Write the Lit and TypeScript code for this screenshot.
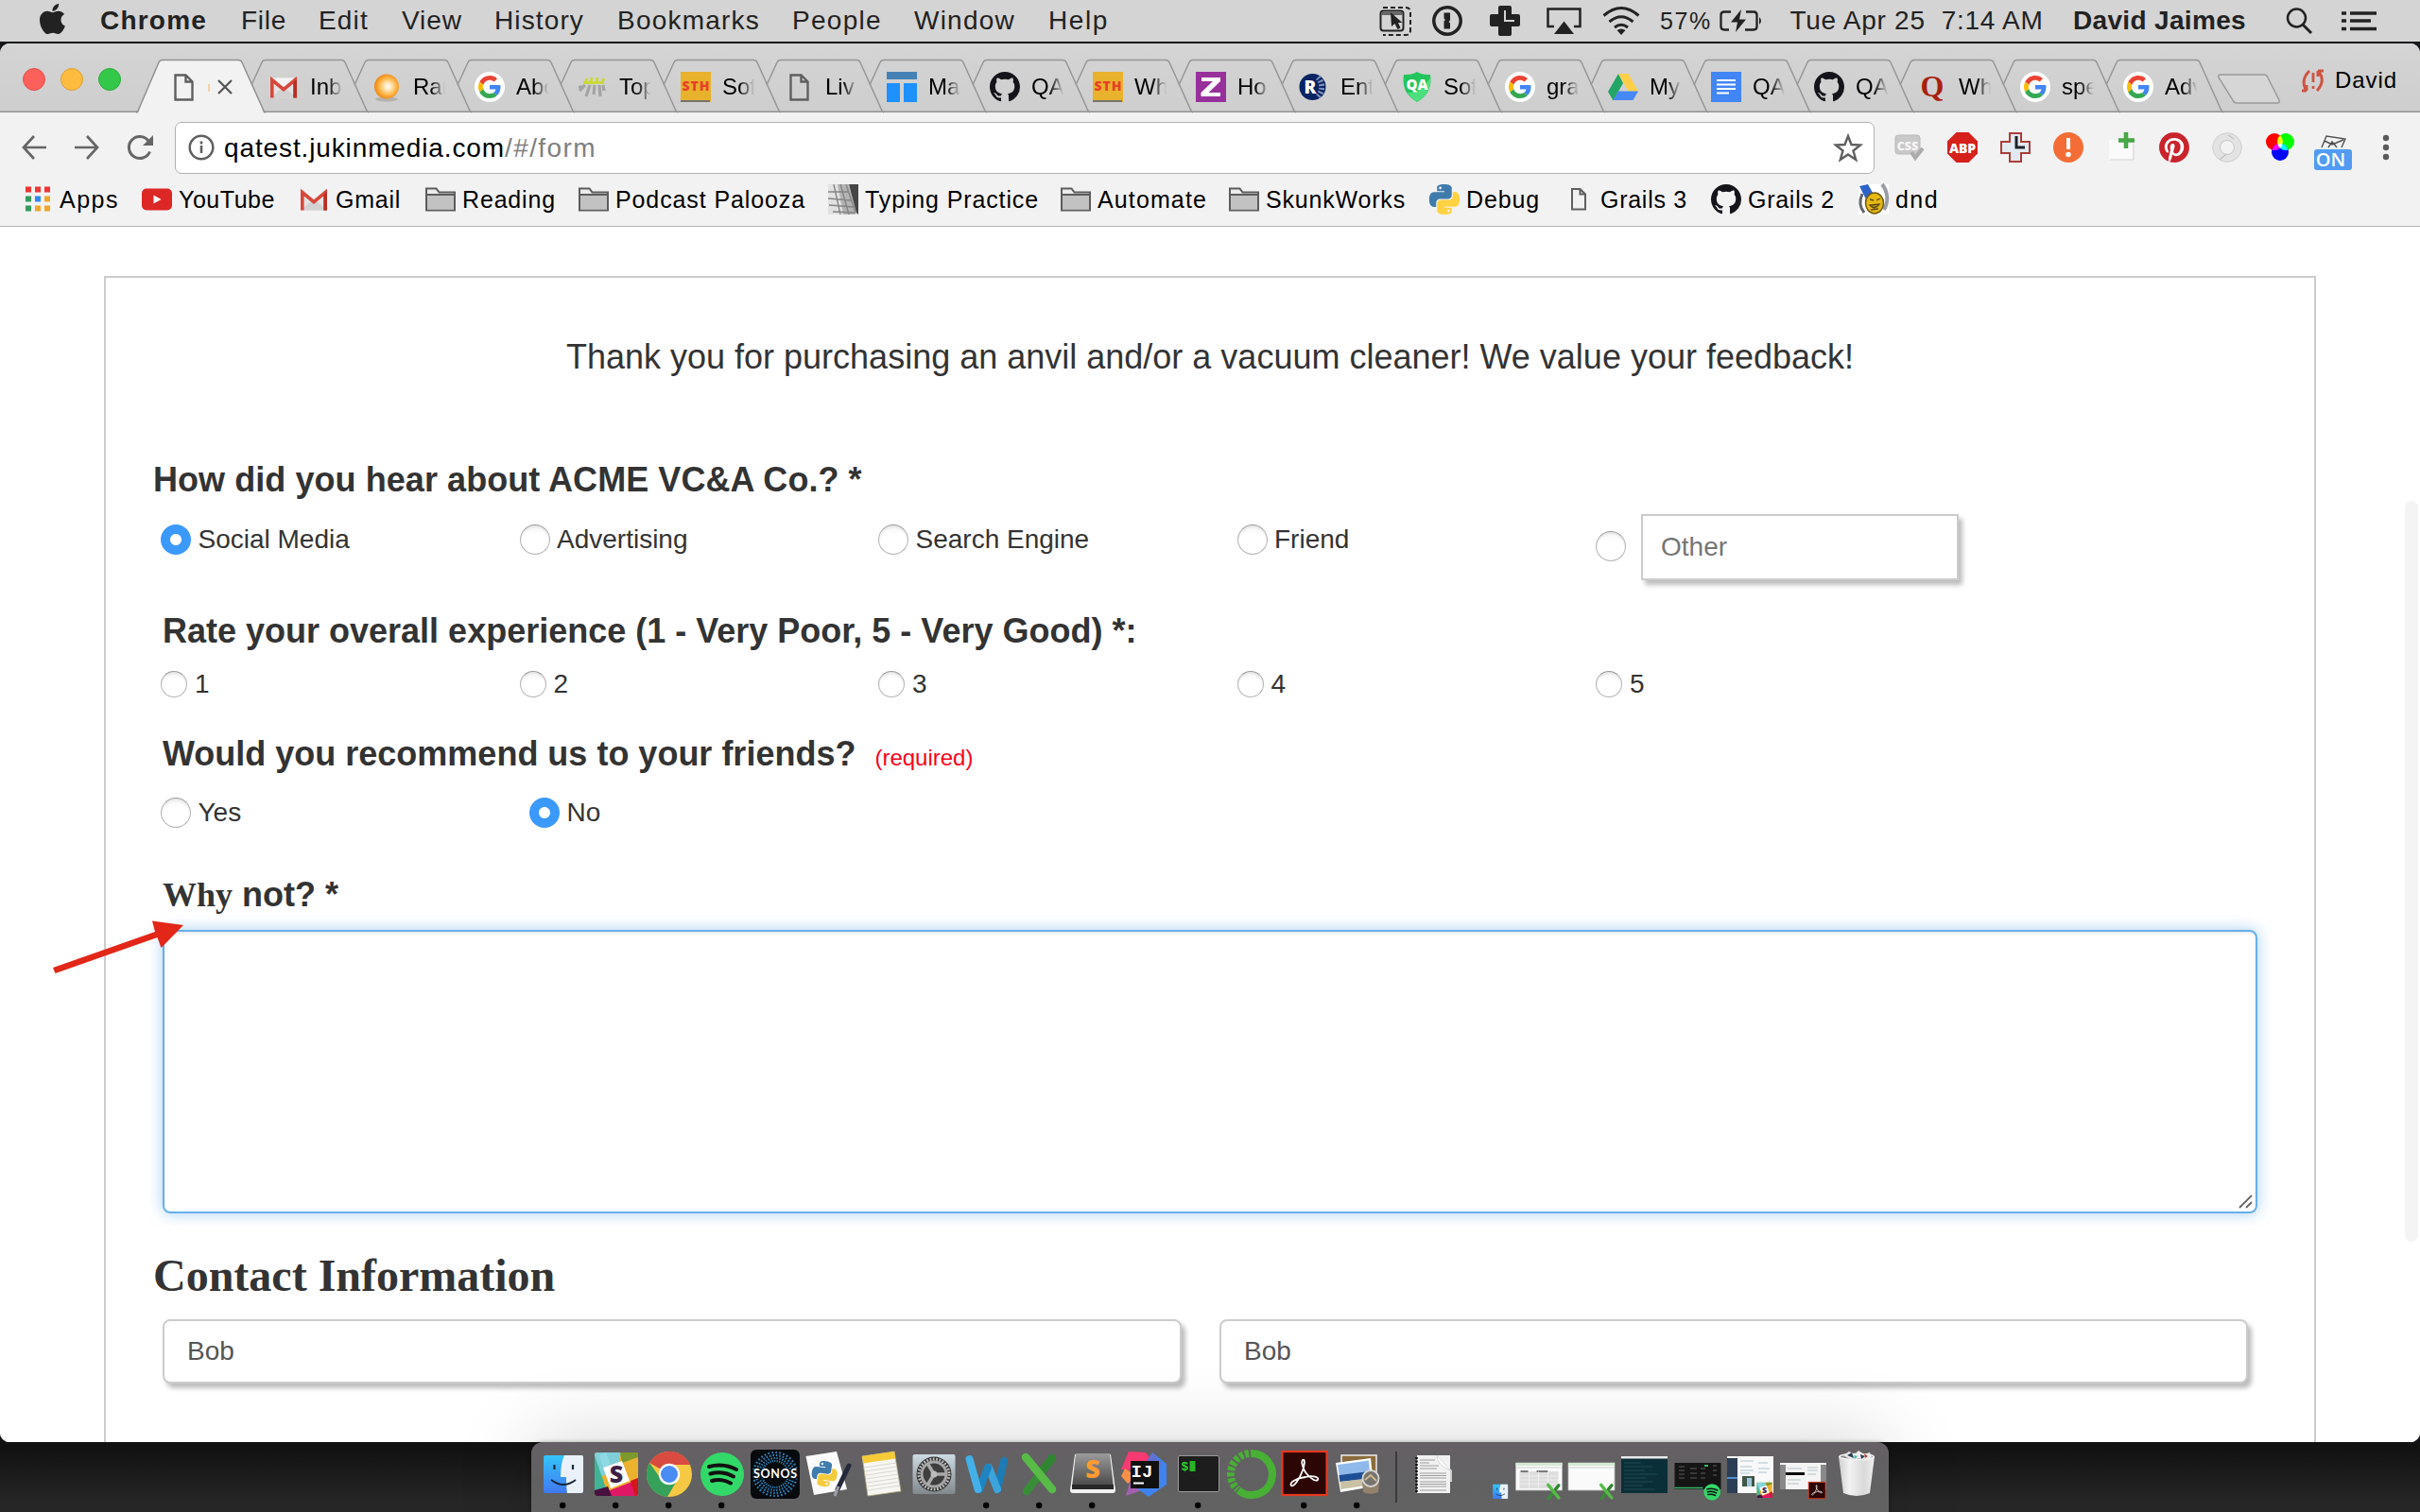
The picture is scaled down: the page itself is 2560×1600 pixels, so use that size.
import { LitElement, html, css, svg, nothing } from "lit";
import { customElement } from "lit/decorators.js";

const doc = (c = "#5f5f5f") => svg`<path d="M7.5 3.5h11l7 7v19h-18z M18.5 3.5v7h7" fill="none" stroke=${c} stroke-width="2.4"/>`;
const gmail = svg`<path d="M2 6.500h28v21H2z" fill="#e4e4e4"/><path d="M2 27.500l14-12 14 12z" fill="#d2d2d2"/><path d="M6 6.500l10 10 10-10z" fill="#f3f3f3"/><path d="M3.800 27.500V8.500L16 18.700 28.200 8.500v19" fill="none" stroke="#d8473b" stroke-width="3.600"/><path d="M26.400 11l3.600-3.500v20h-3.600z" fill="#b92e23"/>`;
const google = svg`<circle cx="16" cy="16" r="16" fill="#fff"/><g transform="translate(4 4) scale(.5)"><path fill="#ea4335" d="M24 9.500c3.540 0 6.710 1.220 9.210 3.600l6.850-6.850C35.900 2.380 30.470 0 24 0 14.620 0 6.510 5.380 2.560 13.220l7.980 6.190C12.430 13.720 17.740 9.500 24 9.500z"/><path fill="#4285f4" d="M46.980 24.550c0-1.570-.150-3.090-.380-4.550H24v9.020h12.940c-.580 2.960-2.260 5.480-4.780 7.180l7.730 6c4.510-4.180 7.090-10.360 7.090-17.650z"/><path fill="#fbbc05" d="M10.530 28.590c-.480-1.450-.760-2.990-.760-4.590s.270-3.140.760-4.590l-7.980-6.190C.920 16.460 0 20.120 0 24c0 3.880.920 7.540 2.560 10.780l7.970-6.190z"/><path fill="#34a853" d="M24 48c6.480 0 11.930-2.130 15.890-5.810l-7.730-6c-2.150 1.450-4.920 2.300-8.160 2.300-6.260 0-11.570-4.220-13.470-9.910l-7.980 6.190C6.510 42.620 14.620 48 24 48z"/></g>`;
const github = svg`<path transform="scale(2)" fill="#15141a" d="M8 0C3.58 0 0 3.58 0 8c0 3.54 2.29 6.53 5.47 7.59.4.07.55-.17.55-.38 0-.19-.01-.82-.01-1.49-2.01.37-2.53-.49-2.69-.94-.09-.23-.48-.94-.82-1.13-.28-.15-.68-.52-.01-.53.63-.01 1.08.58 1.23.82.72 1.21 1.87.87 2.33.66.07-.52.28-.87.51-1.07-1.78-.2-3.64-.89-3.64-3.95 0-.87.31-1.59.82-2.15-.08-.2-.36-1.02.08-2.12 0 0 .67-.21 2.2.82.64-.18 1.32-.27 2-.27s1.36.09 2 .27c1.53-1.04 2.2-.82 2.2-.82.44 1.1.16 1.92.08 2.12.51.56.82 1.27.82 2.15 0 3.07-1.87 3.75-3.65 3.95.29.25.54.73.54 1.48 0 1.07-.01 1.93-.01 2.2 0 .21.15.46.55.38A8.01 8.01 0 0 0 16 8c0-4.42-3.58-8-8-8z"/>`;
const orb = svg`<defs><radialGradient id="orb" cx=".55" cy=".5" r=".55"><stop offset="0" stop-color="#fff"/><stop offset=".3" stop-color="#ffe3b0"/><stop offset=".6" stop-color="#fdb94d"/><stop offset="1" stop-color="#ee8310"/></radialGradient></defs><ellipse cx="16" cy="29" rx="12" ry="2.500" fill="#b5b2ae"/><circle cx="16" cy="15.500" r="13" fill="url(#orb)"/>`;
const bars = svg`<path d="M8 14l-6 6M13 14l-4 12M18 14l-1 10M23 14l1 12M27 14l1 6M1 16h6" stroke="#a4a4a4" stroke-width="3.200"/><path d="M8 12l2-5M14 13l1-7M20 12l1-6M26 11l2-4M6 11.500h22" stroke="#cbd92b" stroke-width="2.600"/>`;
const sth = svg`<path d="M0 0h32v32H0z" fill="#e8b22c"/><path d="M0 30h31v2H0z" fill="#7a736c"/><text class="logo" x="16" y="20" font-size="14" text-anchor="middle" textLength="29" fill="#e8402a">STH</text>`;
const trello = svg`<path d="M0 0h32v8H0z" fill="#4482b5"/><path d="M0 12h14v20H0zM18 12h14v20H18z" fill="#1e90ff"/>`;
const zed = svg`<path d="M0 0h32v32H0z" fill="#97309a"/><path d="M6 6h20v4L13.500 22H26v4H5.500v-4L18 10H6z" fill="#fff"/>`;
const rr = svg`<circle cx="14.500" cy="16" r="14" fill="#0a2463"/><path d="M20 6a14 14 0 0 1 0 20" fill="none" stroke="#7f93bb" stroke-width="6" stroke-dasharray="2 2"/><text class="logo" x="12" y="23" font-size="19" text-anchor="middle" fill="#fff">R</text>`;
const shield = svg`<path d="M16 0c5 3 10 3 14 3 2 12-2 22-14 29C4 25 0 15 2 3c4 0 9 0 14-3z" fill="#22c55b"/><path d="M30 6c1 10-3 19-14 26-4-3-8-6-10-10 10 0 18-5 24-16z" fill="#4be07d"/><text class="logo" x="16" y="19" font-size="15" text-anchor="middle" fill="#fff">QA</text>`;
const drive = svg`<path d="M11 2L0 21l5.500 9.500L16 12z" fill="#23a566"/><path d="M11 2h10.500l10.500 18.500H21.500z" fill="#ffcf48"/><path d="M11 20.500h21L26.500 30H5.500z" fill="#4688f4"/>`;
const gdoc = svg`<path d="M0 0h32v32H0z" fill="#4285f4"/><path d="M6 9h20M6 13.500h20M6 18h20M6 22.500h13" stroke="#fff" stroke-width="2"/>`;
const quora = svg`<text class="serif" x="16" y="26" font-size="32" text-anchor="middle" fill="#a8200d">Q</text>`;
const folder = svg`<path d="M1 4.500h10.500l3 4H31v19H1z" fill="#ececec" stroke="#5c5c5c" stroke-width="2"/><path d="M2 12h28v14.500H2z" fill="#c2c2c2"/><path d="M1 11h30" stroke="#5c5c5c" stroke-width="2"/>`;
const youtube = svg`<rect y="4.500" width="32" height="23" rx="5" fill="#dc2725"/><path d="M12.500 11.500l8 4.500-8 4.500z" fill="#fff"/>`;
const apps = svg`${[0, 1, 2].map(r => [0, 1, 2].map(c => svg`<rect x=${3 + c * 10} y=${2.5 + r * 10} width="6" height="6" fill=${r === 0 ? "#ee3536" : c === 0 ? "#359b5b" : c === 1 && r === 1 ? "#2f88f4" : "#f0a62d"}/>`))}`;
const pyHalf = "M14.25.18l.9.2.73.26.59.3.45.32.34.34.25.34.16.33.1.3.04.26.02.2-.01.13V8.5l-.05.63-.13.55-.21.46-.26.38-.3.31-.33.25-.35.19-.35.14-.33.1-.3.07-.26.04-.21.02H8.77l-.69.05-.59.14-.5.22-.41.27-.33.32-.27.35-.2.36-.15.37-.1.35-.07.32-.04.27-.02.21v3.06H3.17l-.21-.03-.28-.07-.32-.12-.35-.18-.36-.26-.36-.36-.35-.46-.32-.59-.28-.73-.21-.88-.14-1.05-.05-1.23.06-1.22.16-1.04.24-.87.32-.71.36-.57.4-.44.42-.33.42-.24.4-.16.36-.1.32-.05.24-.01h.16l.06.01h8.16v-.83H6.18l-.01-2.75-.02-.37.05-.34.11-.31.17-.28.25-.26.31-.23.38-.2.44-.18.51-.15.58-.12.64-.1.71-.06.77-.04.84-.02 1.27.05zm-6.3 1.98l-.23.33-.08.41.08.41.23.34.33.22.41.09.41-.09.33-.22.23-.34.08-.41-.08-.41-.23-.33-.33-.22-.41-.09-.41.09z";
const python = svg`<g transform="scale(1.333)"><path d=${pyHalf} fill="#3f7cac"/><path d=${pyHalf} fill="#ffd242" transform="rotate(180 12 12)"/></g>`;
const keyboard = svg`<path d="M0 0h32v32H0z" fill="#e2e2e2"/><path d="M22 0h10v32l-4-4z" fill="#454545"/><path d="M10 0h12l8 30-2 2H16z" fill="#b4b4b4"/><path d="M6 0l7 32M13 0l9 32M19 0l10 30M0 8h22M0 15l24 2M1 22l26 2M5 29l24 1" stroke="#858585" stroke-width="1.400" fill="none"/>`;
const dnd = svg`<path d="M0 0h32v32H0z" fill="#fff"/><path d="M1 2l9-2 5 9-7 7z" fill="#2d62c8"/><path d="M25 0c6 8 7 18 2 27" fill="none" stroke="#9a9ca6" stroke-width="4"/><path d="M4 10c-3 7-3 14 2 20" fill="none" stroke="#61646c" stroke-width="3"/><ellipse cx="17" cy="20" rx="9.500" ry="11" fill="#e6b911" stroke="#6f5a10" stroke-width="1.500"/><path d="M12 16l4 1M19 17l4-2M12 22q5 6 10-1zM13 27l8-1" fill="#b08b1a" stroke="#5c4b14" stroke-width="1.300"/>`;

const tabs: [string, unknown][] = [
  ["", doc()], ["Inb", gmail], ["Ran", orb], ["Abo", google], ["Top", bars], ["Sof", sth], ["Liv", doc()],
  ["Ma", trello], ["QA", github], ["Wh", sth], ["Ho", zed], ["Ent", rr], ["Sof", shield], ["gra", google],
  ["My", drive], ["QA", gdoc], ["QA", github], ["Wh", quora], ["spe", google], ["Adv", google],
];

const bookmarks: [number, string, unknown, number][] = [
  [24, "Apps", apps, 60], [150, "YouTube", youtube, 99], [316, "Gmail", gmail, 66], [450, "Reading", folder, 96],
  [612, "Podcast Palooza", folder, 198], [876, "Typing Practice", keyboard, 181], [1122, "Automate", folder, 113],
  [1300, "SkunkWorks", folder, 145], [1512, "Debug", python, 75], [1654, "Grails 3", svg`<path d="M9 5h8.500l5.500 5.500v16H9zM17.500 5v5.500H23" fill="none" stroke="#5f5f5f" stroke-width="2"/>`, 89],
  [1810, "Grails 2", github, 89], [1966, "dnd", dnd, 43],
];

const extensions = [
  svg`<rect x="1" y="3" width="26" height="20" rx="3" fill="#c9c9c9" stroke="#b9b9b9"/><text class="logo" x="14" y="18.500" font-size="12.500" text-anchor="middle" fill="#f6f6f6">CSS</text><path d="M18 21l4 6 8-10" fill="none" stroke="#ababab" stroke-width="4"/>`,
  svg`<path d="M9.500 0h13L32 9.500v13L22.500 32h-13L0 22.500v-13z" fill="#d5201b"/><text class="logo" x="16" y="21.500" font-size="14" text-anchor="middle" textLength="28" fill="#fff">ABP</text>`,
  svg`<path d="M10 1h12v9h9v12h-9v9H10v-9H1V10h9z" fill="#e3e9f1" stroke="#aa3e38" stroke-width="2"/><path d="M17 4v12h9" fill="none" stroke="#1e2328" stroke-width="3"/>`,
  svg`<circle cx="16" cy="16" r="16" fill="#f46d36"/><path d="M14 6h4v12h-4z" fill="#fff"/><circle cx="16" cy="23.500" r="2.700" fill="#fff"/>`,
  svg`<path d="M3 8h12v4h13v17H3z" fill="#fafafa"/><path d="M4 29h25V12" fill="none" stroke="#dedede" stroke-width="1.500"/><path d="M21 0v17M13 8.500h17" stroke="#46a847" stroke-width="4.500"/>`,
  svg`<circle cx="16" cy="16" r="15.500" fill="#fff"/><path transform="scale(1.333)" fill="#c9232c" d="M12.017 0C5.396 0 .029 5.367.029 11.987c0 5.079 3.158 9.417 7.618 11.162-.105-.949-.199-2.403.041-3.439.219-.937 1.406-5.957 1.406-5.957s-.359-.72-.359-1.781c0-1.663.967-2.911 2.168-2.911 1.024 0 1.518.769 1.518 1.688 0 1.029-.653 2.567-.992 3.992-.285 1.193.6 2.165 1.775 2.165 2.128 0 3.768-2.245 3.768-5.487 0-2.861-2.063-4.869-5.008-4.869-3.41 0-5.409 2.562-5.409 5.199 0 1.033.394 2.143.889 2.741.099.12.112.225.085.345-.09.375-.293 1.199-.334 1.363-.053.225-.172.271-.401.165-1.495-.69-2.433-2.878-2.433-4.646 0-3.776 2.748-7.252 7.92-7.252 4.158 0 7.392 2.967 7.392 6.923 0 4.135-2.607 7.462-6.233 7.462-1.214 0-2.354-.629-2.758-1.379l-.749 2.848c-.269 1.045-1.004 2.352-1.498 3.146 1.123.345 2.306.535 3.55.535 6.607 0 11.985-5.365 11.985-11.987C23.97 5.39 18.592.026 11.985.026L12.017 0z"/>`,
  svg`<circle cx="16" cy="16" r="11.500" fill="none" stroke="#e3e3e3" stroke-width="8"/><circle cx="16" cy="16" r="15.300" fill="none" stroke="#cfcfcf"/><circle cx="16" cy="16" r="7.500" fill="none" stroke="#c6c6c6"/><path d="M8 29l7-6M17 3l6 4" stroke="#c2c2c2" stroke-width="1.500"/>`,
  svg`<g transform="translate(1 0)"><circle cx="9" cy="10" r="9" fill="#f00"/><circle cx="21" cy="10" r="9" fill="#0f0"/><circle cx="15" cy="21" r="9" fill="#00f"/><path d="M15 3.300a9 9 0 0 1 2.500 9A9 9 0 0 1 15 16.700a9 9 0 0 1-3-6.700 9 9 0 0 1 3-6.700z" fill="#ff0"/><path d="M6.500 18.500a9 9 0 0 0 8.500-1.800V12a9 9 0 0 0-8.500 6.500z" fill="#f0f"/><path d="M23.500 18.500A9 9 0 0 1 15 16.700V12a9 9 0 0 1 8.500 6.500z" fill="#0ff"/><path d="M12.500 12.500q2.500-1 5 0a9 9 0 0 1-2.500 4.200 9 9 0 0 1-2.500-4.200z" fill="#fff"/></g>`,
  svg`<g><path d="M4 16L9 4l20 3-4 9M7 9l8 4 12-5M11 16l4-6 5 6" fill="none" stroke="#4f4f4f" stroke-width="1.400"/><rect x="-4" y="18" width="40" height="22" rx="3" fill="#529bf2"/><text class="on" x="13.500" y="36" font-size="20" text-anchor="middle" fill="#fff">ON</text></g>`,
  svg`<circle cx="16" cy="6" r="3.200" fill="#5a5a5a"/><circle cx="16" cy="16" r="3.200" fill="#5a5a5a"/><circle cx="16" cy="26" r="3.200" fill="#5a5a5a"/>`,
];

/* Dock drawings: each fills a 56x74 cell, artwork centred on (28,34). */
const finder = svg`<defs><linearGradient id="fb" x2="0" y2="1"><stop offset="0" stop-color="#35c5fa"/><stop offset="1" stop-color="#3f78f0"/></linearGradient></defs><rect x="7" y="14" width="42" height="40" rx="2" fill="url(#fb)"/><path d="M29 14h18a2 2 0 0 1 2 2v36a2 2 0 0 1-2 2H32q-1-6-1-17h-6q0-14 4-23z" fill="#eaf1f8"/><path d="M18.500 24v5M38 24v5" stroke="#1b2b40" stroke-width="2.200"/><path d="M15 40q13 10 26 0" fill="none" stroke="#16263c" stroke-width="1.800"/>`;
const slack = svg`<clipPath id="sc"><rect x="5" y="11" width="46" height="46" rx="2.500"/></clipPath><g clip-path="url(#sc)"><path d="M5 11h46v46H5z" fill="#ecb22e"/><path d="M5 11h28l-4 18-18 8-6-2z" fill="#7fd0d9"/><path d="M5 14l14 41H5z" fill="#40b596"/><path d="M32 11h19v5l-17 6z" fill="#7d982b"/><path d="M8 56l42-16v17H8z" fill="#e01765"/><path d="M5 51l14-4 4 10H5z" fill="#47103f"/><path d="M43 41l8-3v19h-3z" fill="#d4151c"/><path d="M14 27l20-7 8 21-20 8z" fill="#fff"/><path d="M10 14l7-3 5 13-8 3z" fill="#8fd9e2"/></g><text class="logo" x="28" y="43" font-size="25" text-anchor="middle" fill="#3f2045">S</text>`;
const chrome = svg`<circle cx="28" cy="34" r="24" fill="#f6c944"/><path d="M28 34L7.200 22A24 24 0 0 1 50 24H28z" fill="#d94b40"/><path d="M7.200 22A24 24 0 0 0 26 58l11-19-9-5-9 5z" fill="#35a15a"/><circle cx="28" cy="34" r="11.200" fill="#fff"/><circle cx="28" cy="34" r="9" fill="#4b8bf4"/>`;
const spotify = svg`<circle cx="28" cy="34" r="23" fill="#33d968"/><path d="M14 26q15-4 29 3M15.500 33.500q13-3.500 24.500 3M17 41q10-3 20 2.500" fill="none" stroke="#111" stroke-linecap="round" stroke-width="4"/>`;
const sonos = svg`<rect x="2" y="8" width="52" height="52" rx="6" fill="#070a0d"/><g fill="none" stroke="#2f80b8" stroke-width="2.200"><circle cx="28" cy="34" r="23" stroke-dasharray="1.700 2.300"/><circle cx="28" cy="34" r="20" stroke-dasharray="1.600 1.900"/><circle cx="28" cy="34" r="17" stroke-dasharray="1.400 1.600"/><circle cx="28" cy="34" r="14" stroke-dasharray="1.200 1.200"/></g><path d="M3 29h50v10H3z" fill="#070a0d" opacity=".7"/><text class="sonos" x="28" y="38" font-size="12.500" text-anchor="middle" textLength="46" fill="#fff">SONOS</text>`;
const pyapp = svg`<path d="M4.500 15L37 10l11 40-35 6z" fill="#fbfbfb"/><g transform="translate(11 20) rotate(8 12 12) scale(1.120)"><path d=${pyHalf} fill="#3f7cac"/><path d=${pyHalf} fill="#f5cb3e" transform="rotate(180 12 12)"/></g><path d="M50 25L38 50" stroke="#23283a" stroke-width="5" stroke-linecap="round"/><path d="M39 47l-4 10" stroke="#9da0a6" stroke-width="3"/>`;
const notes = svg`<path d="M8 15l34-5 7 42-35 5z" fill="#f7f6f2" stroke="#b9ae84" stroke-width=".8"/><path d="M8 15l34-5 1.200 7.500-34 5z" fill="#f7cb35"/><path d="M10 27l34-5M11 31l34-5M11.500 35l34-5M12 39l34-5M13 43l34-5M13.500 47l34-5M14 51l34-5" stroke="#cfcfcb" stroke-width=".8"/>`;
const prefs = svg`<defs><linearGradient id="pg" x2="0" y2="1"><stop offset="0" stop-color="#cddbe2"/><stop offset="1" stop-color="#82898d"/></linearGradient></defs><rect x="5.500" y="13" width="45" height="42" rx="2" fill="url(#pg)"/><circle cx="28" cy="34" r="18.500" fill="#333"/><circle cx="28" cy="34" r="16" fill="none" stroke="#bbb" stroke-width="3" stroke-dasharray="1.800 1.550"/><circle cx="28" cy="34" r="13" fill="#3e3e3e" stroke="#a6a6a6" stroke-width="3"/><path d="M28 34h12M28 34l-6.500-11M28 34l-6.500 11" stroke="#aaa" stroke-width="3.500"/><circle cx="28" cy="34" r="3.500" fill="#bbb"/>`;
const word = svg`<g fill="none" stroke-linecap="round" stroke-width="8"><path d="M46 20l-7 30" stroke="#1d7cb5"/><path d="M30 27l9 23" stroke="#3ba4dd"/><path d="M29 27l-9 23" stroke="#1e85c2"/><path d="M9.500 18l9 32" stroke="#43b0e9"/></g>`;
const excelX = (t: string) => svg`<g transform=${t} fill="none" stroke-linecap="round" stroke-width="8.500"><path d="M41 17L30 31" stroke="#2f8531"/><path d="M28 34L14 52" stroke="#388d36"/><path d="M13 16l28 34" stroke="#58bb47"/></g>`;
const sublime = svg`<defs><linearGradient id="su" x2="0" y2="1"><stop offset="0" stop-color="#9b9b9b"/><stop offset="1" stop-color="#454545"/></linearGradient></defs><path d="M9 13h38l5 38q0 3-3 3H7q-3 0-3-3z" fill="#f1f1f1"/><path d="M10 12h36l4 36H6z" fill="url(#su)"/><path d="M6 45h44v5H6z" fill="#282828"/><text class="logo" x="28" y="38" font-size="27" text-anchor="middle" fill="#ff9b2f">S</text>`;
const idea = svg`<path d="M10 10l18 1 6 8-8 12-24-2z" fill="#f73a72"/><path d="M6 28l-4 8 7 8 10-8z" fill="#f7904b"/><path d="M7 57l5-17 18 5-6 6z" fill="#a55fb1"/><path d="M35 11l15 12v22L31 58 20 50z" fill="#3f83ef"/><path d="M35 11l10 12-8 10-10-10z" fill="#6272d1"/><rect x="12" y="20" width="30" height="29" fill="#101010"/><text class="mono" x="24" y="37" font-size="19" text-anchor="middle" fill="#fff">IJ</text><path d="M15 43.500h11" stroke="#fff" stroke-width="2"/>`;
const term = svg`<rect x="6.500" y="14.500" width="43" height="38" rx="1.500" fill="#1c1d1c" stroke="#9b9b9b"/><text class="mono" x="9.500" y="30" font-size="13" fill="#2fd12f">$</text><path d="M18.500 20h6v11h-6z" fill="#27b427"/>`;
const conda = svg`<path d="M27 12A22 22 0 1 1 14 51" fill="none" stroke="#47b035" stroke-width="8"/><path d="M25 12A22 22 0 0 0 13 50" fill="none" stroke="#47b035" stroke-width="8" stroke-dasharray="4 2"/>`;
const acro = (t = "") => svg`<g transform=${t}><rect x="4.500" y="10" width="47" height="46" fill="#2c0605" stroke="#e43820" stroke-width="2.200"/><path d="M26 19c3-2 2 6 0 11-3 8-9 18-12 16-3-3 6-8 15-9 8-2 15 0 13 3-3 3-13-6-15-12-2-5-2-8-1-9z" fill="none" stroke="#fff" stroke-width="1.800"/></g>`;
const preview = svg`<path d="M11 14h37v30H11z" fill="#8b6b3d" stroke="#eee" stroke-width="1.500"/><path d="M5 22l37-5 3 30-35 6z" fill="#fff"/><path d="M7 24l33-4.500 1 12-32 5z" fill="#8fb9ea"/><path d="M8.500 35l32-4 .8 8-32 3z" fill="#1e4f95"/><path d="M9.500 42l32-4 1 7-32 5z" fill="#c9c2a4"/><path d="M33 42l1 11q8 3.500 16 0l1-11z" fill="#94826d"/><circle cx="42" cy="38.500" r="8.500" fill="#77736d" stroke="#d5d5d5" stroke-width="1.800"/><path d="M36 40l6-5 6 6" stroke="#d0b893" stroke-width="2" fill="none"/>`;

const paper = svg`<path d="M11 14h35v40H11z" fill="#f1f1f1"/><path d="M32 14l14 14v14h2V30z" fill="#cfcfcf"/><path d="M32 14q0 10 14 16L32 14z" fill="#fff" stroke="#bbb" stroke-width=".5"/><path d="M10.500 16v38" stroke="#0c0c0c" stroke-width="2.500" stroke-dasharray="2 1.500"/><path d="M14 19h16M14 22h10M14 25h20M14 28h18M14 33h28M14 35.500h28M14 38h28M14 42h28M14 44.500h28M14 47h28M14 51h28" stroke="#9d9da0" stroke-width="1.200"/>`;
const sheet = (x: number, grid: boolean) => svg`<path d="M${x} 22h49v29h-49z" fill="#fafafa" stroke="#b9b9b9" stroke-width=".8"/><path d="M${x} 22h49v3h-49z" fill="#d5e8d5"/><path d="M${x + 1} 27h47" stroke="#cfcfcf"/>${grid ? svg`<path d="M${x + 4} 31h41v18h-41z" fill="#dedede"/><path d="M${x + 5} 31h8M${x + 22} 31h12" stroke="#555" stroke-width="1.500"/><path d="M${x + 4} 36h41M${x + 4} 40h41M${x + 4} 44h41M${x + 14} 31v18M${x + 24} 31v18M${x + 34} 31v18" stroke="#f5f5f5" stroke-width=".7"/>` : nothing}`;
const dockApps: [unknown, boolean][] = [
  [finder, true], [slack, true], [chrome, true], [spotify, true], [sonos, false], [pyapp, false], [notes, false], [prefs, false],
  [word, true], [excelX(""), true], [sublime, true], [idea, false], [term, true], [conda, false], [acro(), true], [preview, true],
];
const dockMinis = [
  paper,
  svg`<g transform="translate(32.500 39.500) scale(.38)">${finder}</g>`,
  svg`${sheet(3.500, true)}${excelX("translate(32.500 39) scale(.4)")}`,
  svg`${sheet(3, false)}${excelX("translate(32.500 39) scale(.4)")}`,
  svg`<path d="M3 16h49v38H3z" fill="#0b2f39"/><path d="M3 15h49v2.500H3z" fill="#e9e9e9" /><path d="M6 22h18M6 26h30M6 30h22M6 34h35M6 38h24M6 42h30M6 46h20M6 50h32" stroke="#1f4d55" stroke-width="1"/>`,
  svg`<path d="M3.500 22h49v28h-49z" fill="#151515"/><path d="M3.500 48.500h30" stroke="#37b567" stroke-width="1.500"/><path d="M8 26h6M8 30h6M8 34h6M8 38h6M20 28h7M20 33h7M20 38h7M31 28h5M31 33h5M31 38h5M44 25h4M44 30h4M44 35h4" stroke="#5c5c5c"/><path d="M35 25h4" stroke="#2fc05f" stroke-width="2"/><g transform="translate(32.500 40) scale(.38)">${spotify}</g>`,
  svg`<path d="M3 15h49v39H3z" fill="#f9f9f9"/><path d="M3 17h11v37H3z" fill="#2c3e55"/><path d="M3 37h11v2H3z" fill="#4d8fd0"/><path d="M17 20h14M17 26h12M17 30h14M17 33h10M36 22h10M36 28h12M36 32h9" stroke="#a9c5cf"/><path d="M19 36h13v11H19z" fill="#3f5747"/><path d="M24 38h5v9h-5z" fill="#9cc7d8"/><g transform="translate(32.500 38.500) scale(.36)">${slack}</g>`,
  svg`<path d="M3 22h49v28H3z" fill="#f4f4f4"/><path d="M3 24h6v26H3zM46 24h6v26h-6z" fill="#898989"/><path d="M9 32h20v3H9z" fill="#0b0b0b"/><path d="M11 28h15M11 40h14M11 44h12M32 27h11M32 30h11M32 34h9" stroke="#b5c2c9"/>${acro("translate(31.500 38.500) scale(.38)")}`,
  svg`<defs><linearGradient id="tr"><stop offset="0" stop-color="#cfcfcf"/><stop offset=".3" stop-color="#f2f2f2"/><stop offset=".7" stop-color="#d9d9d9"/><stop offset="1" stop-color="#eee"/></linearGradient></defs><path d="M9 15h38l-5 39q-14 6-28 0z" fill="url(#tr)"/><ellipse cx="28" cy="15.500" rx="18" ry="3" fill="#8f8f8f" stroke="#f5f5f5" stroke-width="1.500"/><path d="M14 14l6-4 6 3 4-4 6 4 6-2 2 5-8 4-6-3-6 3z" fill="#ececec"/><path d="M18 14l5-3 2 6zM32 13l5 2-4 3z" fill="#2c3d52"/><path d="M25 14l4 1-3 3z" fill="#3db5b0"/><path d="M36 12l4 3-3 2z" fill="#b3493c"/>`,
];

const menuItems: [number, string, number][] = [
  [108, "Chrome", 110], [257, "File", 45], [339, "Edit", 50], [427, "View", 61], [525, "History", 92],
  [655, "Bookmarks", 148], [840, "People", 92], [969, "Window", 104], [1111, "Help", 61],
];

@customElement("app-root")
class AppRoot extends LitElement {
  static styles = css`
    :host { display: block; width: 2560px; height: 1600px; overflow: hidden; }
    * { box-sizing: border-box; }
    svg { display: block; overflow: visible; flex: none; }
    .logo { font-family: "Open Sans", sans-serif; font-weight: 800; }
    .on { font-family: "Open Sans", sans-serif; font-weight: 600; }
    .sonos { font-family: Lato, sans-serif; font-weight: 700; }
    .serif { font-family: "Liberation Serif", serif; font-weight: 700; }
    .mono { font-family: "Liberation Mono", monospace; font-weight: 700; }
    .desktop { position: relative; width: 2560px; height: 1600px; overflow: hidden; display: flex; flex-direction: column;
      background: linear-gradient(#15161a 0 1520px, #111 1530px, #262626 1590px); font-family: "Liberation Sans", Arial, sans-serif; color: #000; }
    .fit { display: inline-block; white-space: pre; }
    .slot { flex: none; white-space: nowrap; }

    .menubar { flex: none; height: 44px; display: flex; align-items: center; padding-left: 42px; background: #d4d4d4; color: #222; font-size: 28px; line-height: 44px; }
    .menubar .bold { font-weight: 700; }
    .menubar .small { font-size: 25px; }

    .window { flex: none; margin-top: 2px; height: 1480px; border-radius: 10px; overflow: hidden; display: flex; flex-direction: column; background: #fff; }
    .strip { flex: none; height: 73px; display: flex; align-items: flex-start; background: linear-gradient(#d4d4d4, #cecece); box-shadow: inset 0 -1.500px #919191; }
    .lights { width: 144px; padding: 26px 0 0 24px; display: flex; gap: 16px; }
    .light { width: 24px; height: 24px; border-radius: 50%; border: 1px solid; }
    .red { background: #fc605b; border-color: #e2514c; }
    .yellow { background: #fdbc40; border-color: #dfa033; }
    .green { background: #34c84a; border-color: #2bad39; }
    .tab { position: relative; width: 109px; height: 73px; flex: none; }
    .tab-shape { position: absolute; left: 0; top: 17px; }
    .tab-body { position: relative; display: flex; align-items: center; padding: 30px 0 0 31px; height: 62px; }
    .tab-name { margin-left: 12px; width: 35px; overflow: hidden; white-space: nowrap; font-size: 24px; line-height: 32px;
      -webkit-mask-image: linear-gradient(90deg, #000 55%, transparent); mask-image: linear-gradient(90deg, #000 55%, transparent); }
    .close { margin-left: 20px; }
    .newtab { margin: 32px 0 0 -8px; }
    .profile { display: flex; align-items: center; gap: 10px; margin: 21px 0 0 39px; font-size: 24px; line-height: 36px; }

    .toolbar { flex: none; height: 74px; display: flex; align-items: center; background: #f2f2f2; padding-left: 22px; }
    .nav { display: flex; width: 163px; }
    .omnibox { width: 1798px; height: 55px; display: flex; align-items: center; border: 1.500px solid #b1b1b1; border-radius: 7px; background: #fff; padding: 0 13px; }
    .url { flex: 1; margin-left: 10px; font-size: 28px; line-height: 52px; color: #000; padding-top: 2px; }
    .url .path { color: #7f7f7f; }
    .exts { display: flex; gap: 24px; margin-left: 21px; }

    .bookmarks { flex: none; height: 47px; display: flex; align-items: flex-start; background: #f2f2f2; padding: 2px 0 0 24px; border-bottom: 1.500px solid #b4b4b4; font-size: 25px; }
    .bookmark { flex: none; display: flex; align-items: center; gap: 7px; line-height: 32px; white-space: nowrap; height: 32px; }

    .page { position: relative; flex: 1; background: #fff; color: #333; font-size: 28px; padding: 52px 110px 0; }
    .card { height: 1300px; border: 2px solid #ccc; padding: 63px 60px 0 60px; }
    .title { margin: 0; font-size: 36px; font-weight: 400; line-height: 41px; text-align: center; }
    .q { margin: 0; height: 40px; font-size: 36px; line-height: 40px; font-weight: 700; white-space: nowrap; }
    .q.first { margin: 90px 0 0 -10px; letter-spacing: .06px; }
    .q.second { margin-top: 34px; }
    .q.third { margin-top: 34px; }
    .q.fourth { margin-top: 47px; }
    .req { font-size: 24px; line-height: 24px; font-weight: 400; color: #f8001b; margin-left: 10px; }
    .seriftext { font-family: "Liberation Serif", serif; line-height: 36px; }
    .opts { display: grid; grid-template-columns: repeat(5, 379.500px); margin-left: -2px; }
    .opts.a { margin-top: 16px; height: 70px; }
    .opts.b { margin-top: 16px; height: 40px; }
    .opts.c { margin-top: 22px; height: 40px; grid-template-columns: 390px 390px; }
    .opt { display: flex; align-items: center; height: 53px; gap: 7.500px; }
    .opt.other { height: 68px; gap: 16px; }
    .opts.b .opt, .opts.c .opt { height: 40px; }
    .opts.b .opt { gap: 8px; }
    .radio { flex: none; width: 32px; height: 32px; border-radius: 50%; background: linear-gradient(#f3f3f3, #fff 30%); border: 1.500px solid #b5b5b5; border-top-color: #9a9a9a; box-shadow: inset 0 2px 2px #e6e6e6; }
    .radio.small { width: 28px; height: 28px; }
    .radio.on-state { border: none; box-shadow: none; background: radial-gradient(circle, #fff 0 5.500px, #3b99fc 6.500px); }
    .field { border: 2px solid #ccc; background: #fff; box-shadow: 4px 5px 5px #bdbdbd; display: flex; align-items: center; }
    .otherbox { width: 336px; height: 70px; margin-top: 2px; flex: none; padding-left: 19px; color: #757575; }
    .area { margin-top: 17px; width: 2216px; height: 300px; border: 2px solid #66afe9; border-radius: 8px; box-shadow: 0 0 16px rgba(102,175,233,.6), inset 0 2px 2px rgba(0,0,0,.075); display: flex; justify-content: flex-end; align-items: flex-end; padding: 2px; }
    .contact { margin: 36px 0 0 -10px; font: 700 48px/60px "Liberation Serif", serif; }
    .names { display: grid; grid-template-columns: 1078px 1088px; gap: 40px; margin-top: 16px; }
    .name { height: 68px; border-radius: 8px; padding: 0 24px; color: #555; }
    .thumb { position: absolute; right: 2px; top: 290px; width: 14px; height: 784px; border-radius: 7px; background: #f4f4f4; }
    .arrow { position: absolute; left: 50px; top: 730px; }

    .dock { position: absolute; left: 562px; bottom: 0; width: 1436px; height: 74px; border-radius: 12px 12px 0 0; padding: 0 6px; display: flex;
      background: linear-gradient(#656065, #616162 60%, #626262); box-shadow: 0 0 84px rgba(0,0,0,.18), 0 0 4px rgba(0,0,0,.3); }
    .sep { width: 24px; padding: 10px 0 0 12px; }
    .sep-line { width: 2px; height: 54px; background: #3c3a3c; }
  `;

  /* Spread each fitted label over its nominal width. */
  firstUpdated() {
    this.renderRoot.querySelectorAll<HTMLElement>(".fit").forEach(el => {
      const want = Number(el.dataset.w);
      const n = (el.textContent ?? "").length;
      el.style.letterSpacing = `${((want - el.getBoundingClientRect().width) / n).toFixed(3)}px`;
    });
  }

  fit(t: string, w: number, cls = "") {
    return html`<span class="fit ${cls}" data-w=${w + 3}>${t}</span>`;
  }
  icon(g: unknown, w = 32, h = 32) {
    return html`<svg width=${w} height=${h} viewBox="0 0 ${w} ${h}">${g}</svg>`;
  }
  slotted(x: number, next: number, c: unknown) {
    return html`<div class="slot" style="width:${next - x}px">${c}</div>`;
  }

  menubar() {
    const items: [number, unknown][] = [
      [42, this.icon(svg`<path transform="translate(-.300 1.800) scale(.0715)" fill="#222" d="M318.700 268.700c-.2-36.700 16.400-64.400 50-84.800-18.800-26.900-47.200-41.700-84.700-44.600-35.500-2.800-74.300 20.700-88.500 20.700-15 0-49.400-19.700-76.400-19.700C63.300 141.200 4 184.800 4 273.500q0 39.300 14.400 81.200c12.800 36.700 59 126.700 107.200 125.200 25.200-.6 43-17.900 75.800-17.900 31.800 0 48.300 17.900 76.400 17.900 48.600-.7 90.400-82.500 102.600-119.300-65.200-30.700-61.700-90-61.700-91.900zm-56.600-164.200c27.300-32.400 24.800-61.900 24-72.500-24.100 1.400-52 16.400-67.900 34.900-17.500 19.800-27.800 44.300-25.600 71.900 26.100 2 49.900-11.400 69.500-34.300z"/>`, 28, 44)],
      ...menuItems.map(([x, t, w], i): [number, unknown] => [x - 2, this.fit(t, w, i === 0 ? "bold" : "")]),
      [1459, this.icon(svg`<rect x="1.500" y="4.500" width="24" height="21" rx="3" fill="none" stroke="#222" stroke-width="2"/><path d="M2 6h23v3H2z" fill="#666"/><path d="M4 1h24q5 0 5 5v19q0 5-5 5H4" fill="none" stroke="#222" stroke-width="2" stroke-dasharray="5 3"/><path d="M12 6l1 15 3.500-3 3 6 3-1.500-2.500-5.500h4.500z" fill="#222"/>`, 34, 31)],
      [1515, this.icon(svg`<circle cx="16" cy="16" r="14.200" fill="none" stroke="#222" stroke-width="3.500"/><path d="M12.500 7.500h6.500v8l-1.500 1.500 1.500 1.500v6h-6.500v-8l1.500-1.500-1.500-1.500z" fill="#222"/>`)],
      [1576, this.icon(svg`<path d="M9 2q0-2 2-2h10q2 0 2 2v7h7q2 0 2 2v9q0 2-2 2h-7v8q0 2-2 2H11q-2 0-2-2v-8H2q-2 0-2-2v-9q0-2 2-2h7z" fill="#222"/><path d="M16 5v11h10" fill="none" stroke="#d4d4d4" stroke-width="2"/>`)],
      [1636, this.icon(svg`<path d="M8 20H1.500V1.500h34V20H29" fill="none" stroke="#222" stroke-width="2.500"/><path d="M18.500 14.500L29 28H8z" fill="#222"/>`, 38, 28)],
      [1695, this.icon(svg`<g fill="none" stroke="#222" stroke-width="3"><path d="M1.500 9.500q18.500-16 37 0"/><path d="M7.500 16q12.500-10.500 25 0"/><path d="M13 22q7-5.500 14 0"/></g><path d="M20 30l-4.500-5q4.500-3 9 0z" fill="#222"/>`, 40, 30)],
      [1756, this.fit("57%", 52, "small")],
      [1819, this.icon(svg`<path d="M12 1.500H5Q1.500 1.500 1.500 5v12q0 3.500 3.500 3.500h5M28 1.500h8q3.500 0 3.500 3.500v12q0 3.500-3.500 3.500h-9" fill="none" stroke="#222" stroke-width="2.300"/><path d="M23-1L12 12.500h7L17 23l11-13.500h-7z" fill="#222"/><path d="M42 7q4 4 0 8z" fill="#222"/>`, 46, 22)],
      [1893.5, this.fit("Tue Apr 25  7:14 AM", 265)],
      [2193, this.fit("David Jaimes", 180, "bold")],
      [2418, this.icon(svg`<circle cx="11.500" cy="11" r="9.500" fill="none" stroke="#222" stroke-width="2.500"/><path d="M18 18l9 9" stroke="#222" stroke-width="3"/>`, 29, 28)],
      [2477, this.icon(svg`<path d="M0 2h5M9 2h28M0 10h5M9 10h22M0 18.500h5M9 18.500h28" stroke="#222" stroke-width="3.500"/>`, 37, 20)],
    ];
    return html`<div class="menubar">${items.map(([x, c], i) => this.slotted(x, items[i + 1]?.[0] ?? 2560, c))}</div>`;
  }

  tab([name, ico]: [string, unknown], i: number) {
    const on = i === 0;
    return html`<div class="tab">
      <svg class="tab-shape" width="140" height="57" viewBox="0 0 140 57">
        ${on
          ? svg`<path d="M0 57q2-1 3-5L24 3q1-2.500 4-2.500h80q3 0 4 2.500l22 49q1 4 3 5z" fill="#f2f2f2"/><path d="M0 56q2 0 3-4L24 3q1-2.500 4-2.500h80q3 0 4 2.500l22 49q1 4 3 4" fill="none" stroke="#919191" stroke-width="1.500"/>`
          : svg`<path d="M13 27L24 3q1-2.500 4-2.500h80q3 0 4 2.500l22 49q1 3 3 4" fill="none" stroke="#969696" stroke-width="1.500"/>`}
      </svg>
      <div class="tab-body">${on
        ? html`${this.icon(svg`<g transform="translate(3 0)">${ico}</g><path d="M46 13v8" stroke="#f3c98c" stroke-width="1.500"/>`)}<svg class="close" width="20" height="16" viewBox="0 0 20 16"><path d="M4 1l14 14M18 1L4 15" stroke="#555" stroke-width="2.200"/></svg>`
        : html`${this.icon(ico)}<div class="tab-name">${name}</div>`}</div>
    </div>`;
  }

  opt(label: string, on = false, small = false) {
    return html`<div class="opt"><span class="radio ${on ? "on-state" : ""} ${small ? "small" : ""}"></span>${label}</div>`;
  }

  render() {
    return html`<div class="desktop">
      ${this.menubar()}
      <div class="window">
        <div class="strip">
          <div class="lights"><span class="light red"></span><span class="light yellow"></span><span class="light green"></span></div>
          ${tabs.map((t, i) => this.tab(t, i))}
          <svg class="newtab" width="80" height="34" viewBox="-30 0 80 34"><path d="M1 4q-1-3 2-3h46q3 0 4 3l12 24q1 3-2 3H20q-3 0-4-3z" fill="#d6d6d6" stroke="#9b9b9b" stroke-width="1.500"/></svg>
          <div class="profile">
            ${this.icon(svg`<path d="M8 1Q-2 11 5 22M5 22H0M5 22v-6M17 1h6M17 1v6M17 1Q26 11 16 22" fill="none" stroke="#d05442" stroke-width="3"/><path d="M12 3v10M12 17v3" stroke="#d05442" stroke-width="2.800"/>`, 25, 23)}
            ${this.fit("David", 63)}
          </div>
        </div>
        <div class="toolbar">
          <div class="nav">
            ${this.slotted(22, 78, this.icon(svg`<path d="M14 2L3 14l11 12M3 14h24" fill="none" stroke="#666" stroke-width="2.700"/>`, 28, 28))}
            ${this.slotted(78, 134, this.icon(svg`<path d="M14 2l11 12-11 12M25 14H1" fill="none" stroke="#666" stroke-width="2.700"/>`, 28, 28))}
            ${this.icon(svg`<path d="M24.500 18.500A11.500 11.500 0 1 1 23 7" fill="none" stroke="#666" stroke-width="3"/><path d="M28 1v11H17z" fill="#666"/>`, 28, 28)}
          </div>
          <div class="omnibox">
            ${this.icon(svg`<circle cx="14" cy="14" r="12.300" fill="none" stroke="#5f5f5f" stroke-width="2.500"/><path d="M14 12v8M14 7.500v3" stroke="#5f5f5f" stroke-width="2.600"/>`, 28, 28)}
            <div class="url">${this.fit("qatest.jukinmedia.com", 294)}${this.fit("/#/form", 94, "path")}</div>
            ${this.icon(svg`<path d="M14 2l3.500 9 9.500.5-7.500 6 2.700 9.500L14 21.500 5.800 27l2.700-9.500-7.500-6 9.500-.5z" fill="none" stroke="#5f5f5f" stroke-width="2.400"/>`, 28, 28)}
          </div>
          <div class="exts">${extensions.map(e => this.icon(e))}</div>
        </div>
        <div class="bookmarks">
          ${bookmarks.map(([x, t, ico, w], i) => this.slotted(x, bookmarks[i + 1]?.[0] ?? 2200, html`<div class="bookmark">${this.icon(ico)}${this.fit(t, w)}</div>`))}
        </div>
        <div class="page">
          <div class="card">
            <p class="title">Thank you for purchasing an anvil and/or a vacuum cleaner! We value your feedback!</p>
            <h3 class="q first">How did you hear about ACME VC&amp;A Co.? *</h3>
            <div class="opts a">
              ${this.opt("Social Media", true)}${this.opt("Advertising")}${this.opt("Search Engine")}${this.opt("Friend")}
              <div class="opt other"><span class="radio"></span><div class="field otherbox">Other</div></div>
            </div>
            <h3 class="q second">Rate your overall experience (1 - Very Poor, 5 - Very Good) *:</h3>
            <div class="opts b">${["1", "2", "3", "4", "5"].map(n => this.opt(n, false, true))}</div>
            <h3 class="q third">Would you recommend us to your friends? <span class="req">(required)</span></h3>
            <div class="opts c">${this.opt("Yes")}${this.opt("No", true)}</div>
            <h3 class="q fourth"><span class="seriftext">Why</span> not? *</h3>
            <div class="area"><svg width="16" height="16" viewBox="0 0 16 16"><path d="M1 14L14 1M8 14l6-6" stroke="#666" stroke-width="1.800"/></svg></div>
            <h2 class="contact">Contact Information</h2>
            <div class="names"><div class="field name">Bob</div><div class="field name">Bob</div></div>
          </div>
          <div class="thumb"></div>
          <svg class="arrow" width="150" height="70" viewBox="50 970 150 70"><path d="M56 1024L164 986l-3-11.500 33 4.500-23.500 24-4-11L58.500 1030z" fill="#e22718"/></svg>
        </div>
      </div>
      <div class="dock">
        ${dockApps.map(([g, dot]) => this.icon(svg`${g}${dot ? svg`<circle cx="27.200" cy="67" r="3.200" fill="#000"/>` : nothing}`, 56, 74))}
        <div class="sep"><div class="sep-line"></div></div>
        ${dockMinis.map(g => this.icon(g, 56, 74))}
      </div>
    </div>`;
  }
}
